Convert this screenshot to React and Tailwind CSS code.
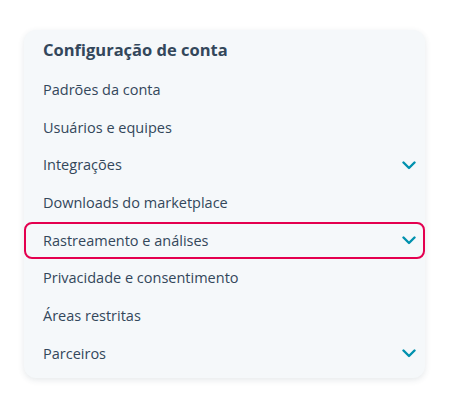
import React from "react";

const items = [
  { label: "Padrões da conta" },
  { label: "Usuários e equipes" },
  { label: "Integrações", expandable: true },
  { label: "Downloads do marketplace" },
  { label: "Rastreamento e análises", expandable: true, active: true },
  { label: "Privacidade e consentimento" },
  { label: "Áreas restritas" },
  { label: "Parceiros", expandable: true },
];

const Chevron = () => (
  <svg width="14" height="9" viewBox="0 0 14 9" fill="none" className="shrink-0">
    <path d="M1.5 1.5 7 7l5.5-5.5" stroke="#0091ae" strokeWidth="2.4" strokeLinecap="round" strokeLinejoin="round" />
  </svg>
);

const App = () => {
  return (
    <div className="min-h-[408px] w-[450px] bg-white pt-[30px] pl-6" style={{ fontFamily: '"Open Sans", sans-serif' }}>
      <div className="w-[401px] rounded-xl bg-[#f5f8fa] shadow-[0_2px_6px_rgba(45,62,80,0.12)] pb-[5px]">
        <h2 className="h-[41px] pl-[19px] pt-[8px] text-[16.5px] font-bold text-[#33475b]">Configuração de conta</h2>
        <ul>
          {items.map((item) => (
            <li
              key={item.label}
              className={
                item.active
                  ? "flex h-[37.7px] items-center justify-between rounded-lg border-2 border-[#e4004f] pl-[17px] pr-[7px] text-[14.5px] text-[#33475b]"
                  : "flex h-[37.7px] items-center justify-between pl-[19px] pr-[9px] text-[14.5px] text-[#33475b]"
              }
            >
              <span>{item.label}</span>
              {item.expandable && <Chevron />}
            </li>
          ))}
        </ul>
      </div>
    </div>
  );
};

export default App;
